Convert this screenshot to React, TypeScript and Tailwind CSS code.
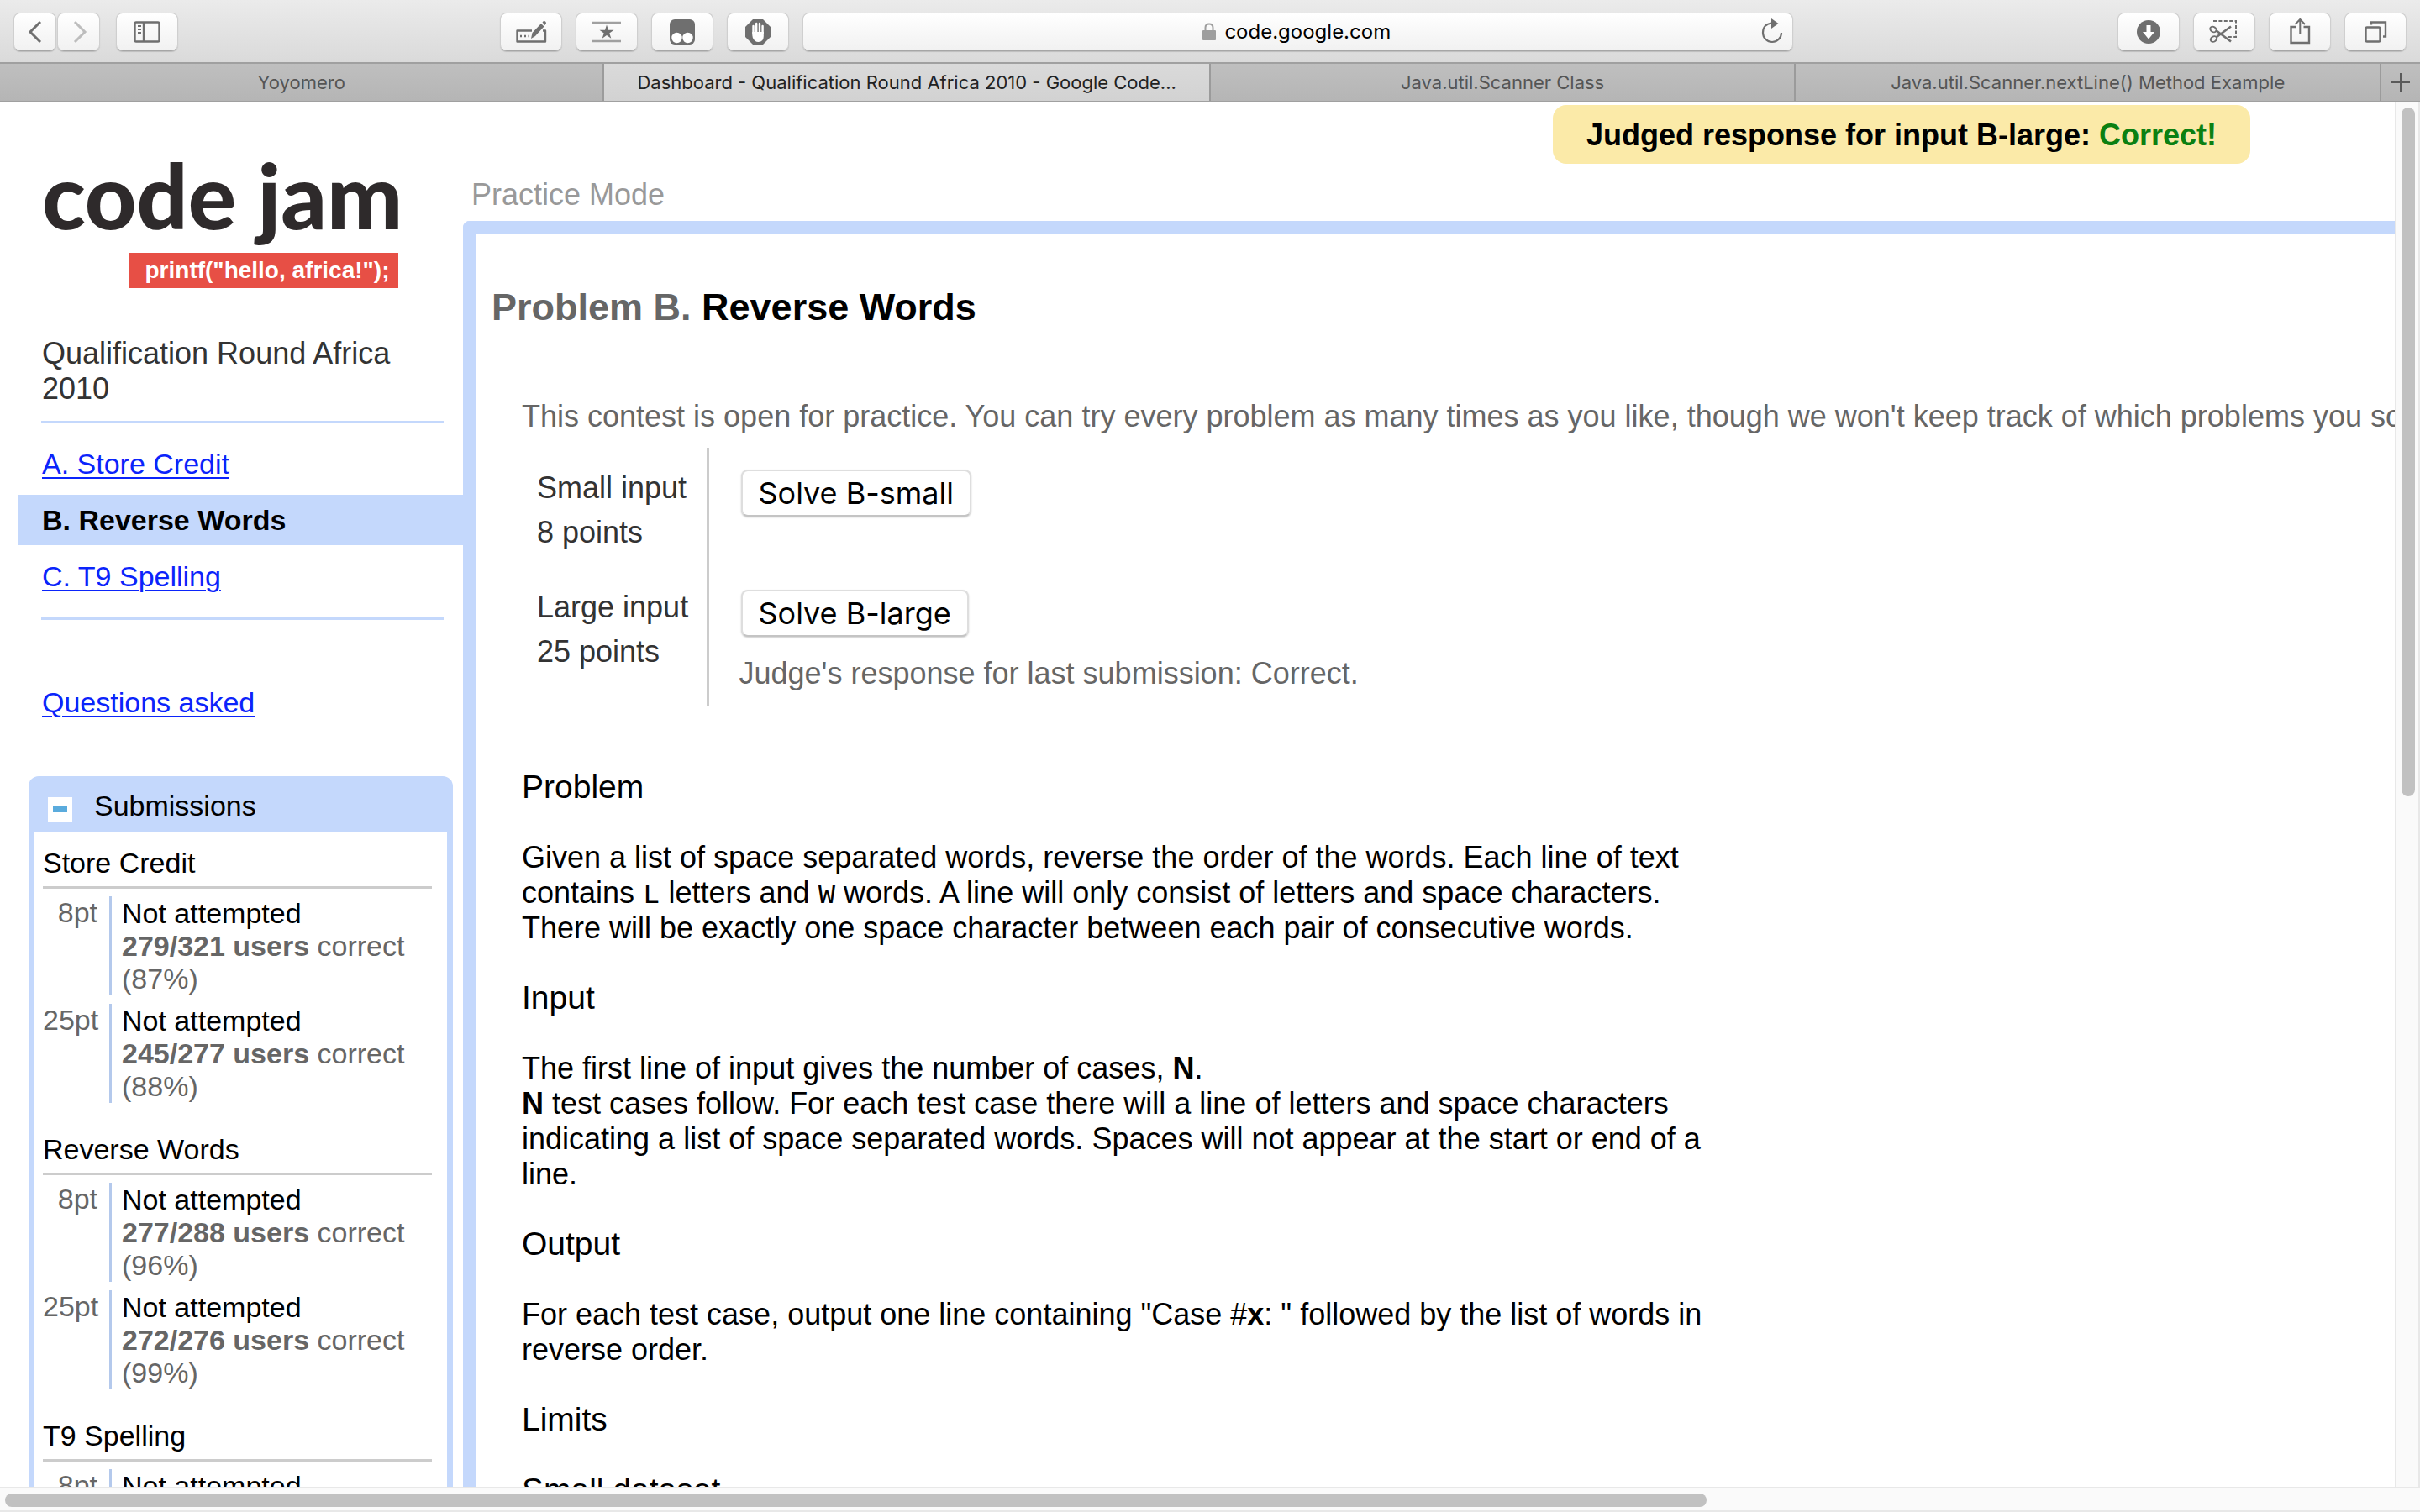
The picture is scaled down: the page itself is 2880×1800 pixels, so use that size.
import React from 'react';

type IconProps = { children: React.ReactNode; w?: number };

function Icon({ children, w = 40 }: IconProps) {
  return (
    <svg width={w} height={40} viewBox={`0 0 ${w} 40`} fill="none" stroke="#6f6f6f" strokeWidth={2.4} aria-hidden="true">
      {children}
    </svg>
  );
}

const toolButton =
  'flex h-[46px] shrink-0 items-center justify-center rounded-lg border border-[#cfcfcf] border-b-[#a6a6a6] bg-linear-to-b from-white to-[#f1f1f1] shadow-[0_1px_1px_#bdbdbd]';

function ToolButton({ label, narrow, children }: { label: string; narrow?: boolean; children: React.ReactNode }) {
  return (
    <button type="button" aria-label={label} className={`${toolButton} ${narrow ? 'w-[51px]' : 'w-[74px]'}`}>
      {children}
    </button>
  );
}

function Toolbar() {
  return (
    <div className="flex h-[74px] shrink-0 items-start bg-linear-to-b from-[#ebebeb] to-[#dadada] px-4 pt-[15px]">
      <div className="flex flex-[940] justify-between">
        <div className="flex">
          <div className="flex gap-px">
            <ToolButton label="Back" narrow>
              <Icon>
                <path d="M26 8 L14 20 L26 32" strokeWidth={3} />
              </Icon>
            </ToolButton>
            <ToolButton label="Forward" narrow>
              <Icon>
                <path d="M15 8 L27 20 L15 32" strokeWidth={3} stroke="#bdbdbd" />
              </Icon>
            </ToolButton>
          </div>
          <div className="ml-[19px] flex">
            <ToolButton label="Show sidebar">
              <Icon>
                <rect x="5.5" y="8.5" width="29" height="23" rx="1.5" />
                <path d="M16 8 V32" />
                <path d="M9 13 H13 M9 17 H13 M9 21 H13" strokeWidth={2} />
              </Icon>
            </ToolButton>
          </div>
        </div>
        <div className="mr-4 flex gap-4">
          <ToolButton label="Edit">
            <Icon>
              <path d="M21 18.5 H3.500 V31.500 H37 V18.500 H34" strokeLinejoin="round" />
              <path d="M7 25 H9 M12 25 H14 M16.500 25 H18" />
              <path d="M20 28 L21.500 21 L32 10 L35.500 13.500 L25 25 Z M33.500 8.500 L35 7 Q36.500 6.500 37.500 8 Q38.500 9.500 37.500 10.500 L36.500 12 Z" fill="#6f6f6f" stroke="none" />
            </Icon>
          </ToolButton>
          <ToolButton label="Top sites">
            <Icon>
              <path d="M3 9 H37 M3 31 H37" stroke="#a0a0a0" strokeWidth={2.400} />
              <path d="M20 11.500 L22 17.700 H28.500 L23.300 21.500 L25.300 27.700 L20 24 L14.700 27.700 L16.700 21.500 L11.500 17.700 H18 Z" fill="#6f6f6f" stroke="none" />
            </Icon>
          </ToolButton>
          <ToolButton label="Tampermonkey">
            <Icon>
              <rect x="5" y="5" width="30" height="30" rx="6" fill="#6f6f6f" stroke="none" />
              <circle cx="13.500" cy="27" r="6.200" fill="#fff" stroke="none" />
              <circle cx="26.500" cy="27" r="6.200" fill="#fff" stroke="none" />
            </Icon>
          </ToolButton>
          <ToolButton label="Ad blocker">
            <Icon>
              <path d="M14 5 H26 L35 14 V26 L26 35 H14 L5 26 V14 Z" fill="#6f6f6f" stroke="none" />
              <path d="M14.500 22 V13 M18.200 20 V10 M22 20 V10 M25.600 22 V13" stroke="#fff" strokeWidth={2.400} strokeLinecap="round" />
              <path d="M13.300 20 H26.800 V25 Q26.800 32 20.500 32 Q16 32 13.900 27 L13.300 24 Z" fill="#fff" stroke="none" />
            </Icon>
          </ToolButton>
        </div>
      </div>

      <div className="relative flex h-[46px] flex-[1178] items-center justify-center gap-2.5 rounded-lg border border-[#cfcfcf] border-b-[#a6a6a6] bg-linear-to-b from-white to-[#f1f1f1] shadow-[0_1px_1px_#bdbdbd]">
        <svg width="16" height="22" viewBox="0 0 16 22" aria-hidden="true">
          <path d="M3.500 10 V6 Q3.500 1.500 8 1.500 Q12.500 1.500 12.500 6 V10" fill="none" stroke="#9e9e9e" strokeWidth="2" />
          <rect y="9" width="16" height="12" rx="1" fill="#9e9e9e" />
        </svg>
        <input
          type="text"
          aria-label="Address"
          defaultValue="code.google.com"
          className="w-[200px] bg-transparent font-[Inter,sans-serif] text-[24px] text-black outline-none"
        />
        <button type="button" aria-label="Reload" className="absolute right-1 top-0.5">
          <Icon>
            <path d="M20 9.500 Q9 10.500 9 21 A11 11 0 0 0 31 21" strokeWidth={2.200} />
            <path d="M19 4 L27.500 10 L19 16 Z" fill="#6f6f6f" stroke="none" />
          </Icon>
        </button>
      </div>

      <div className="flex flex-[731] justify-end gap-4">
        <ToolButton label="Downloads">
          <Icon>
            <circle cx="20" cy="20" r="14" fill="#6f6f6f" stroke="none" />
            <path d="M17.500 12 H22.500 V20 H27 L20 28.500 L13 20 H17.500 Z" fill="#fff" stroke="none" />
          </Icon>
        </ToolButton>
        <ToolButton label="Clip page">
          <Icon>
            <path d="M7 7 H34 V26 H24" strokeDasharray="4 2.400" strokeWidth={2} />
            <path d="M28 13.500 L11 26 M28 31.500 L10 18" strokeWidth={2.600} />
            <ellipse cx="7" cy="17" rx="4" ry="3" strokeWidth={2} transform="rotate(35 7 17)" />
            <ellipse cx="7.500" cy="28.500" rx="4" ry="3" strokeWidth={2} transform="rotate(-35 7.500 28.500)" />
          </Icon>
        </ToolButton>
        <ToolButton label="Share">
          <Icon>
            <path d="M16 14 H9.500 V33 H31 V14 H24.500" />
            <path d="M20.300 23 V5 M14.500 11 L20.300 5 L26 11" strokeWidth={2} />
          </Icon>
        </ToolButton>
        <ToolButton label="Show all tabs">
          <Icon>
            <rect x="8.500" y="14.500" width="17" height="17" rx="1.500" />
            <path d="M15 11.500 V8.500 H32 V25.500 H29" />
          </Icon>
        </ToolButton>
      </div>
    </div>
  );
}

const tabBase =
  'min-w-0 truncate border-r-2 border-[#9b9b9b] px-4 text-center font-[Inter,sans-serif] text-[22px] leading-[44px]';

function TabBar() {
  return (
    <div className="flex h-12 shrink-0 border-y-2 border-[#a0a0a0] bg-linear-to-b from-[#bfbfbf] to-[#b5b5b5] text-[#555]">
      <button type="button" className={`${tabBase} flex-[720]`}>Yoyomero</button>
      <button type="button" className={`${tabBase} flex-[722] bg-linear-to-b from-[#dadada] to-[#d2d2d2] text-[#222]`}>
        Dashboard - Qualification Round Africa 2010 - Google Code...
      </button>
      <button type="button" className={`${tabBase} flex-[696]`}>Java.util.Scanner Class</button>
      <button type="button" className={`${tabBase} flex-[696]`}>Java.util.Scanner.nextLine() Method Example</button>
      <button type="button" aria-label="New tab" className="flex w-[46px] items-center justify-center">
        <svg width="24" height="24" viewBox="0 0 24 24" stroke="#5a5a5a" strokeWidth="2" aria-hidden="true">
          <path d="M1 12 H23 M12 1 V23" />
        </svg>
      </button>
    </div>
  );
}

const submissions = [
  { name: 'Store Credit', rows: [['8pt', '279/321', '87%'], ['25pt', '245/277', '88%']] },
  { name: 'Reverse Words', rows: [['8pt', '277/288', '96%'], ['25pt', '272/276', '99%']] },
  { name: 'T9 Spelling', rows: [['8pt', '', '']] },
];

function Submissions() {
  return (
    <section className="mr-3 ml-[34px] mt-[68px] flex-1 rounded-t-xl border-x-[7px] border-t-8 border-[#c4d8fc] text-[34px] leading-[39px]">
      <h3 className="flex h-[58px] items-center bg-[#c4d8fc] pb-1 pl-4 text-black">
        <button type="button" aria-label="Collapse submissions" className="mr-[26px] mt-2 flex size-[29px] items-center justify-center bg-white">
          <span className="h-[7px] w-[17px] bg-[#5aabdd]" />
        </button>
        Submissions
      </h3>
      <div className="flex flex-col gap-9 pt-[18px] pl-2.5 pr-[18px]">
        {submissions.map((group) => (
          <div key={group.name}>
            <h4 className="border-b-3 border-[#ccc] pb-2 text-black">{group.name}</h4>
            <div className="mt-[9px] flex flex-col gap-2.5">
              {group.rows.map(([points, users, percent]) => (
                <div key={points} className="flex text-[#666]">
                  <div className="w-[79px] shrink-0 pr-3.5 text-right">{points}</div>
                  <div className="border-l-3 border-[#b4c9ec] pt-px pl-3">
                    <div className="text-black">Not attempted</div>
                    {users && (
                      <>
                        <div className="whitespace-nowrap">
                          <b>{users} users</b> correct
                        </div>
                        <div>({percent})</div>
                      </>
                    )}
                  </div>
                </div>
              ))}
            </div>
          </div>
        ))}
      </div>
    </section>
  );
}

function Sidebar() {
  return (
    <aside className="flex w-[551px] shrink-0 flex-col">
      <div className="ml-[50px] mt-10 flex w-[424px] flex-col items-end">
        <div className="w-full whitespace-nowrap font-[Lato,sans-serif] text-[107px] font-black leading-[139px] text-[#2e2a2b]">code jam</div>
        <div className="flex h-[42px] w-[320px] items-center justify-center bg-[#e74f45] pl-2 text-[28px] font-bold text-white">
          printf("hello, africa!");
        </div>
      </div>
      <h2 className="mx-[50px] mt-[57px] text-[36px] leading-[42px] text-[#333]">Qualification Round Africa 2010</h2>
      <hr className="ml-[49px] mr-[23px] mt-[17px] border-t-3 border-[#c4d8fc]" />
      <nav className="ml-[22px] mt-[18px] flex flex-col gap-[7px] text-[34px] leading-[60px] text-[#0b24fb]">
        <div className="pl-7">
          <a href="#a" className="underline decoration-2 underline-offset-4">A. Store Credit</a>
        </div>
        <div className="bg-[#c4d8fc] pl-7 font-bold text-black">B. Reverse Words</div>
        <div className="pl-7">
          <a href="#c" className="underline decoration-2 underline-offset-4">C. T9 Spelling</a>
        </div>
      </nav>
      <hr className="ml-[49px] mr-[23px] mt-[19px] border-t-3 border-[#c4d8fc]" />
      <div className="ml-[50px] mt-[79px] text-[34px] leading-[39px]">
        <a href="#questions" className="text-[#0b24fb] underline decoration-2 underline-offset-4">Questions asked</a>
      </div>
      <Submissions />
    </aside>
  );
}

function SolveButton({ children }: { children: React.ReactNode }) {
  return (
    <button
      type="button"
      className="ml-0.5 block h-14 rounded-lg border-2 border-[#dedede] border-b-[#c4c4c4] bg-white px-[19px] font-[Inter,sans-serif] text-[36px] leading-[50px] text-black shadow-[0_1px_2px_#ccc]"
    >
      {children}
    </button>
  );
}

function Heading({ children }: { children: React.ReactNode }) {
  return <h3 className="mt-10 text-[39px] leading-[44px]">{children}</h3>;
}

function Para({ children }: { children: React.ReactNode }) {
  return <p className="mt-[41px] max-w-[1440px]">{children}</p>;
}

function Problem() {
  return (
    <main className="min-w-0 flex-1">
      <div className="pl-2.5 pt-[89px] pb-2.5 text-[36px] leading-[42px] text-[#999]">Practice Mode</div>
      <div className="rounded-tl-lg border-l-16 border-t-16 border-[#c4d8fc] pt-[61px] text-[36px] leading-[42px] text-black">
        <h1 className="pl-[18px] text-[45px] font-bold leading-[52px]">
          <span className="text-[#666]">Problem B.</span> Reverse Words
        </h1>
        <div className="pl-[54px]">
          <p className="mt-[83px] overflow-hidden whitespace-nowrap text-[#666]">
            This contest is open for practice. You can try every problem as many times as you like, though we won't keep track of which problems you solve.
          </p>
          <table className="mt-4 border-collapse text-left align-top">
            <tbody>
              <tr className="h-[142px] align-top">
                <th scope="row" className="w-[221px] border-r-3 border-[#ccc] pl-[18px] pt-[21px] font-normal leading-[53px] text-[#333]">
                  Small input<br />8 points
                </th>
                <td className="pl-9 pt-[26px]">
                  <SolveButton>Solve B-small</SolveButton>
                </td>
              </tr>
              <tr className="h-[166px] align-top">
                <th scope="row" className="w-[221px] border-r-3 border-[#ccc] pl-[18px] pt-[21px] font-normal leading-[53px] text-[#333]">
                  Large input<br />25 points
                </th>
                <td className="pl-9 pt-[27px] text-[#666]">
                  <SolveButton>Solve B-large</SolveButton>
                  <p className="mt-[23px]">Judge's response for last submission: Correct.</p>
                </td>
              </tr>
            </tbody>
          </table>
          <div className="pt-[34px]">
            <Heading>Problem</Heading>
            <Para>
              Given a list of space separated words, reverse the order of the words. Each line of text contains{' '}
              <code className="font-['Liberation_Mono',monospace] text-[34px] leading-none">L</code> letters and{' '}
              <code className="font-['Liberation_Mono',monospace] text-[34px] leading-none">W</code> words. A line will only consist of letters and space
              characters. There will be exactly one space character between each pair of consecutive words.
            </Para>
            <Heading>Input</Heading>
            <Para>
              The first line of input gives the number of cases, <b>N</b>.<br />
              <b>N</b> test cases follow. For each test case there will a line of letters and space characters indicating a list of space separated words.
              Spaces will not appear at the start or end of a line.
            </Para>
            <Heading>Output</Heading>
            <Para>
              For each test case, output one line containing "Case #<b>x</b>: " followed by the list of words in reverse order.
            </Para>
            <Heading>Limits</Heading>
            <Heading>Small dataset</Heading>
          </div>
        </div>
      </div>
    </main>
  );
}

export default function App() {
  return (
    <div className="flex h-screen flex-col overflow-hidden bg-white font-['Liberation_Sans',Arial,sans-serif]">
      <Toolbar />
      <TabBar />
      <div className="flex min-h-0 flex-1">
        <div className="relative flex min-w-0 flex-1 overflow-hidden">
          <Sidebar />
          <Problem />
          <div role="status" className="absolute right-[172px] top-[3px] rounded-2xl bg-[#fbeaa8] px-10 pt-[15px] pb-[13px] text-[36px] font-bold leading-[42px] text-black">
            Judged response for input B-large: <span className="text-[#0b8012]">Correct!</span>
          </div>
        </div>
        <div className="w-[30px] shrink-0 border-x-2 border-[#e8e8e8] bg-[#fafafa] px-1.5 pt-1.5">
          <div className="h-[820px] w-4 rounded-full bg-[#c1c1c1]" />
        </div>
      </div>
      <div className="h-[30px] shrink-0 border-y-2 border-[#e8e8e8] bg-[#fafafa] px-1.5 pt-1.5">
        <div className="h-4 w-[2025px] rounded-full bg-[#c1c1c1]" />
      </div>
    </div>
  );
}
